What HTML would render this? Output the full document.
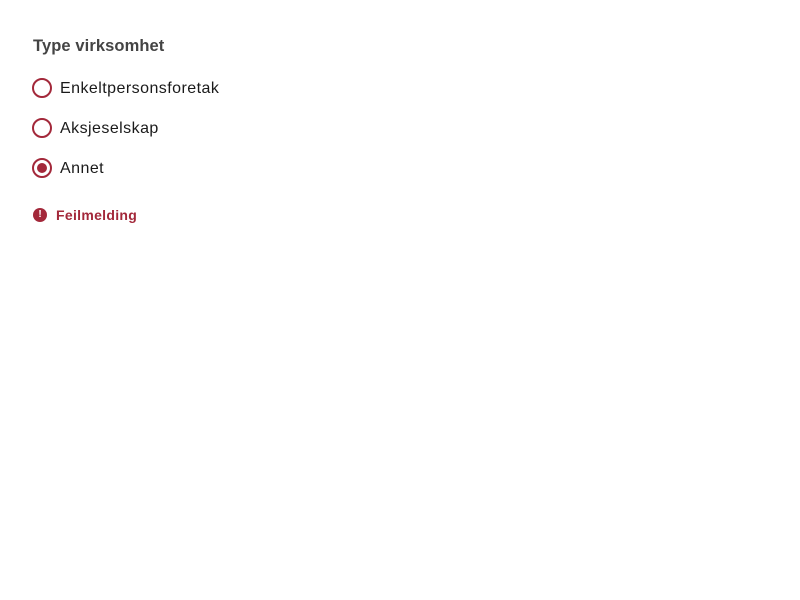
<!DOCTYPE html>
<html><head><meta charset="utf-8"><style>
body{margin:0;width:800px;height:600px;background:#fff;font-family:"Liberation Sans",sans-serif;}
.lbl{position:absolute;left:33px;top:37px;font-size:16.5px;letter-spacing:0.1px;font-weight:bold;color:#444;}
.r{position:absolute;left:32px;height:20px;display:flex;align-items:center;font-size:16px;letter-spacing:0.45px;color:#1a1a1a;}
.r span.t{position:relative;top:1px;}
.c{width:16px;height:16px;border:2px solid #a3283a;border-radius:50%;margin-right:8px;box-sizing:content-box;position:relative;}
.c.on::after{content:"";position:absolute;left:3px;top:3px;width:10px;height:10px;border-radius:50%;background:#a3283a;}
.err{position:absolute;left:33px;top:207px;font-size:14px;letter-spacing:0.3px;font-weight:bold;color:#a3283a;display:flex;align-items:center;}
.ic{width:14px;height:14px;border-radius:50%;background:#a3283a;color:#fff;font-size:10px;line-height:14px;text-align:center;margin-right:9px;letter-spacing:0;}
</style></head><body>
<div class="lbl">Type virksomhet</div>
<div class="r" style="top:78px"><span class="c"></span><span class="t">Enkeltpersonsforetak</span></div>
<div class="r" style="top:118px"><span class="c"></span><span class="t">Aksjeselskap</span></div>
<div class="r" style="top:158px"><span class="c on"></span><span class="t">Annet</span></div>
<div class="err"><span class="ic">!</span>Feilmelding</div>
</body></html>
